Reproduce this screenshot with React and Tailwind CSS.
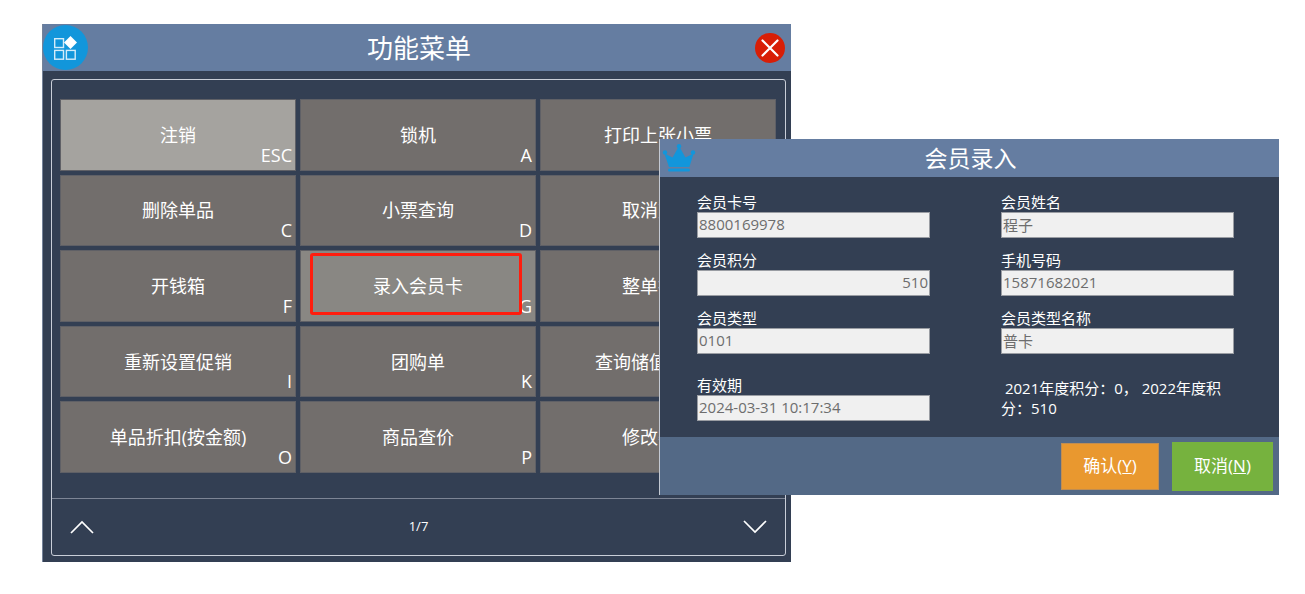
import { useState } from "react";

const menuItems = [
  { label: "注销", shortcut: "ESC", tone: "bg-[#a5a39f]" },
  { label: "锁机", shortcut: "A" },
  { label: "打印上张小票", shortcut: "B" },
  { label: "删除单品", shortcut: "C" },
  { label: "小票查询", shortcut: "D" },
  { label: "取消交易", shortcut: "E" },
  { label: "开钱箱", shortcut: "F" },
  { label: "录入会员卡", shortcut: "G", tone: "bg-[#898783]", marked: true },
  { label: "整单折扣", shortcut: "H" },
  { label: "重新设置促销", shortcut: "I" },
  { label: "团购单", shortcut: "K" },
  { label: "查询储值卡余额", shortcut: "L" },
  { label: "单品折扣(按金额)", shortcut: "O" },
  { label: "商品查价", shortcut: "P" },
  { label: "修改密码", shortcut: "Q" },
];

const memberFields = [
  { id: "cardNo", label: "会员卡号", value: "8800169978" },
  { id: "name", label: "会员姓名", value: "程子" },
  { id: "points", label: "会员积分", value: "510", align: "text-right" },
  { id: "phone", label: "手机号码", value: "15871682021" },
  { id: "type", label: "会员类型", value: "0101" },
  { id: "typeName", label: "会员类型名称", value: "普卡" },
];

const AppsIcon = () => (
  <svg viewBox="0 0 45 45" className="size-[45px]" aria-hidden="true">
    <circle cx="22.5" cy="22.5" r="22.5" fill="#1296db" />
    <g fill="none" stroke="#d4ecf9" strokeWidth="1.4">
      <rect x="11.7" y="13.7" width="8.8" height="8.8" />
      <rect x="11.7" y="25.4" width="8.8" height="8.8" />
      <rect x="23.4" y="25.4" width="8.8" height="8.8" />
    </g>
    <path d="M27.5 11 L34 17.5 L27.5 24 L21 17.5 Z" fill="#fff" />
  </svg>
);

const CloseIcon = () => (
  <svg viewBox="0 0 30 30" className="size-[30px]" aria-hidden="true">
    <circle cx="15" cy="15" r="15" fill="#d81e06" />
    <path
      d="M7.5 7.5 L22.5 22.5 M22.5 7.5 L7.5 22.5"
      stroke="#fff"
      strokeWidth="2.2"
      strokeLinecap="round"
    />
  </svg>
);

const CrownIcon = () => (
  <svg viewBox="0 0 34 30" className="h-[30px] w-[34px]" fill="#1296db" aria-hidden="true">
    <path d="M7 24 L2.4 10.4 L10.6 14.6 L17 3 L23.4 14.6 L31.6 10.4 L27.4 24 Z" />
    <circle cx="17" cy="3.2" r="2.2" />
    <circle cx="3" cy="9.4" r="2.2" />
    <circle cx="31" cy="9.4" r="2.2" />
    <rect x="6" y="25.4" width="22" height="3" rx="1.5" />
  </svg>
);

const Chevron = ({ d }) => (
  <svg viewBox="0 0 24 14" className="h-[14px] w-6" fill="none" stroke="#fff" strokeWidth="1.7" aria-hidden="true">
    <path d={d} />
  </svg>
);

const MenuTile = ({ item }) => (
  <button
    type="button"
    className={`relative border border-[#5f6066] text-lg text-white ${item.tone || "bg-[#726e6c]"}`}
  >
    {item.label}
    <span className="absolute right-[3px] bottom-[3px] leading-6">{item.shortcut}</span>
    {item.marked && (
      <span className="absolute top-[2px] right-[13px] bottom-[6px] left-[9px] rounded-[3px] border-[3px] border-[#ff1d0e]" />
    )}
  </button>
);

const MenuWindow = () => {
  const [page, setPage] = useState(1);

  return (
    <section className="mr-[514px] ml-[42px] border-l border-[#75839a] bg-[#333f53]">
      <header className="flex items-center bg-[#657da1] py-px pr-[6px]">
        <AppsIcon />
        <h1 className="flex-1 pt-px pr-[5px] text-center text-[26px] leading-9 text-white">功能菜单</h1>
        <button type="button" aria-label="关闭">
          <CloseIcon />
        </button>
      </header>
      <div className="pt-2 pr-[5px] pb-[6px] pl-2">
        <div className="rounded-[3px] border border-[#c9ced8]">
          <div className="grid h-[419px] grid-cols-3 grid-rows-5 gap-1 border-b border-[#7d8595] pt-[19px] pr-[9px] pb-[25px] pl-2">
            {menuItems.map((item) => (
              <MenuTile key={item.label} item={item} />
            ))}
          </div>
          <footer className="flex h-14 items-center justify-between px-[18px] text-white">
            <button type="button" aria-label="上一页" onClick={() => setPage(Math.max(1, page - 1))}>
              <Chevron d="M1 13 L12 2 L23 13" />
            </button>
            <span className="text-[13px]">{page}/7</span>
            <button type="button" aria-label="下一页" onClick={() => setPage(Math.min(7, page + 1))}>
              <Chevron d="M1 1 L12 12 L23 1" />
            </button>
          </footer>
        </div>
      </div>
    </section>
  );
};

const Field = ({ id, label, value, align = "text-left" }) => (
  <div className="flex min-w-0 flex-col">
    <label htmlFor={id} className="leading-5 text-white">
      {label}
    </label>
    <input
      id={id}
      defaultValue={value}
      readOnly
      className={`h-[26px] w-full border border-[#9a9da3] bg-[#f0f0f0] px-px pb-[2px] text-[#6d6d6d] ${align}`}
    />
  </div>
);

const MemberDialog = () => (
  <section
    role="dialog"
    aria-labelledby="memberTitle"
    className="absolute top-[139px] right-[26px] left-[659px] border-l border-[#c3c9d3] bg-[#333f53] text-[15px]"
  >
    <header className="grid h-[38px] grid-cols-[36px_1fr_36px] items-center bg-[#657da1] pl-[2px]">
      <CrownIcon />
      <h2 id="memberTitle" className="text-center text-[23px] leading-8 text-white">
        会员录入
      </h2>
    </header>
    <div className="pt-[15px] pr-[45px] pb-4 pl-[37px]">
      <div className="grid grid-cols-2 gap-x-[71px] gap-y-3">
        {memberFields.map((field) => (
          <Field key={field.id} {...field} />
        ))}
      </div>
      <div className="mt-[21px] grid grid-cols-2 gap-x-[71px]">
        <Field id="expires" label="有效期" value="2024-03-31 10:17:34" />
        <p className="pt-[3px] leading-5 text-white">&nbsp;2021年度积分：0， 2022年度积分：510</p>
      </div>
    </div>
    <footer className="flex h-[58px] items-center justify-end gap-[13px] bg-[#536986] pr-[6px] text-[17px] text-white">
      <button type="button" className="h-[47px] w-[98px] border border-[#c08d51] bg-[#e9982f]">
        确认(<u>Y</u>)
      </button>
      <button type="button" className="h-[49px] w-[101px] bg-[#76b23e]">
        取消(<u>N</u>)
      </button>
    </footer>
  </section>
);

export default function App() {
  return (
    <main className="relative min-h-screen bg-white pt-6 font-['Open_Sans','Noto_Sans_CJK_SC',sans-serif]">
      <MenuWindow />
      <MemberDialog />
    </main>
  );
}
